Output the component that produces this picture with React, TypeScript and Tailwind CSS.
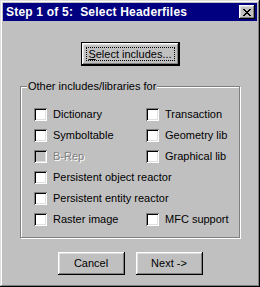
import React from "react";

const bevelOut =
  "shadow-[inset_-1px_-1px_0_#000,inset_1px_1px_0_#fff,inset_-2px_-2px_0_#808080,inset_2px_2px_0_#dfdfdf]";

function Check({ label, disabled = false }: { label: string; disabled?: boolean }) {
  return (
    <div className="flex h-[21px] items-center gap-[6px]">
      <span
        className={`h-[13px] w-[13px] shrink-0 shadow-[inset_1px_1px_0_#808080,inset_-1px_-1px_0_#fff,inset_2px_2px_0_#000,inset_-2px_-2px_0_#dfdfdf] ${
          disabled ? "bg-[#c0c0c0]" : "bg-white"
        }`}
      />
      <span
        className={
          disabled
            ? "text-[#808080] [text-shadow:1px_1px_0_#fff]"
            : "text-black"
        }
      >
        {label}
      </span>
    </div>
  );
}

function Button({ children, isDefault = false }: { children: React.ReactNode; isDefault?: boolean }) {
  if (isDefault) {
    return (
      <button className="h-[24px] w-[99px] border border-black bg-[#c0c0c0] p-0">
        <div className={`flex h-full w-full items-center justify-center p-[4px] ${bevelOut}`}>
          <div className="flex h-full w-full items-center justify-center border border-dotted border-black">
            {children}
          </div>
        </div>
      </button>
    );
  }
  return (
    <button className={`flex h-[23px] w-[67px] items-center justify-center bg-[#c0c0c0] ${bevelOut}`}>
      {children}
    </button>
  );
}

export default function App() {
  return (
    <div
      className="flex h-[287px] w-[260px] flex-col bg-[#c0c0c0] p-[3px] text-[11px] leading-none text-black shadow-[inset_-1px_-1px_0_#000,inset_1px_1px_0_#dfdfdf,inset_-2px_-2px_0_#808080,inset_2px_2px_0_#fff]"
      style={{ fontFamily: '"Liberation Sans", Arial, sans-serif' }}
    >
      {/* Title bar */}
      <div className="flex h-[18px] items-center justify-between bg-[#000080] pl-[3px] pr-[2px]">
        <span className="whitespace-pre text-[12px] font-bold tracking-[0.2px] text-white">Step 1 of 5:  Select Headerfiles</span>
        <span className={`flex h-[14px] w-[16px] items-center justify-center bg-[#c0c0c0] ${bevelOut}`}>
          <svg width="8" height="7" viewBox="0 0 8 7" shapeRendering="crispEdges">
            <path d="M0 0h2v1H0zM6 0h2v1H6zM1 1h2v1H1zM5 1h2v1H5zM2 2h4v1H2zM3 3h2v1H3zM2 4h4v1H2zM1 5h2v1H1zM5 5h2v1H5zM0 6h2v1H0zM6 6h2v1H6z" fill="#000" />
          </svg>
        </span>
      </div>

      {/* Body */}
      <div className="flex flex-1 flex-col items-center pt-[21px]">
        <Button isDefault>
          <span>
            <span className="underline">S</span>elect includes...
          </span>
        </Button>

        <div className="relative mt-[20px] h-[152px] w-[220px] border border-[#808080] pl-[13px] pt-[17px] shadow-[1px_1px_0_#fff,inset_1px_1px_0_#fff]">
          <span className="absolute left-[6px] top-[-6px] bg-[#c0c0c0] px-[1px]">Other includes/libraries for</span>
          <div className="grid grid-cols-[112px_1fr]">
            <Check label="Dictionary" />
            <Check label="Transaction" />
            <Check label="Symboltable" />
            <Check label="Geometry lib" />
            <Check label="B-Rep" disabled />
            <Check label="Graphical lib" />
            <div className="col-span-2">
              <Check label="Persistent object reactor" />
            </div>
            <div className="col-span-2">
              <Check label="Persistent entity reactor" />
            </div>
            <Check label="Raster image" />
            <Check label="MFC support" />
          </div>
        </div>

        <div className="mt-[14px] flex gap-[11px]">
          <Button>Cancel</Button>
          <Button>Next -&gt;</Button>
        </div>
      </div>
    </div>
  );
}
